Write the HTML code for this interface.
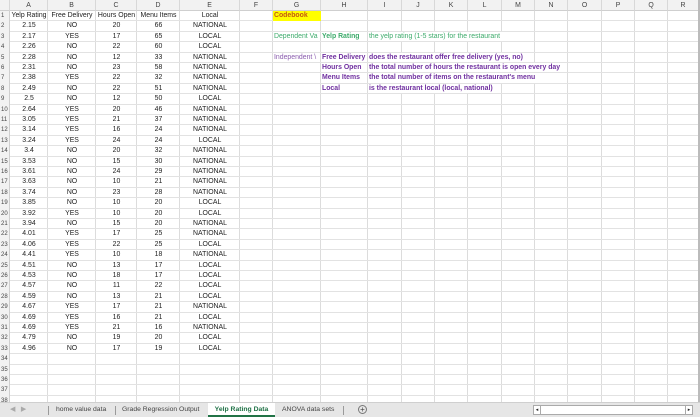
<!DOCTYPE html>
<html><head><meta charset="utf-8"><style>
*{margin:0;padding:0;box-sizing:border-box}
body{width:700px;height:417px;overflow:hidden;background:#fff;font-family:"Liberation Sans",sans-serif;font-size:6.9px;color:#222;position:relative}
.c{position:absolute;white-space:nowrap;line-height:10.4px;height:10.4px;overflow:visible}
.vl{position:absolute;top:0;width:1px;background:#dcdcdc;height:402px}
.hl{position:absolute;left:0;height:1px;background:#e2e2e2;width:700px}
.hd{position:absolute;top:0;height:11px;background:#f2f2f2;border-bottom:1px solid #cfcfcf;border-right:1px solid #d8d8d8;text-align:center;line-height:11px;color:#444}
.rn{position:absolute;left:0;width:10px;background:#f2f2f2;color:#444;font-size:6px;line-height:10.4px;height:10.4px;padding-left:1px;border-right:1px solid #cfcfcf}
#tabs{position:absolute;left:0;top:402px;width:700px;height:15px;background:#e6e6e6;border-top:1px solid #cfcfcf}
.t{position:absolute;top:0;height:14px;line-height:13px;font-size:6.8px;color:#444}
.sep{position:absolute;top:3px;width:1px;height:9px;background:#9a9a9a}
</style></head><body>
<div id="g"></div>
<div id="tabs">
<div class="t" style="left:10px;color:#aaa">◀&nbsp;&nbsp;&nbsp;▶</div>
<div class="sep" style="left:48px"></div>
<div class="t" style="left:56px">home value data</div>
<div class="sep" style="left:115px"></div>
<div class="t" style="left:122px">Grade Regression Output</div>
<div class="t" style="left:208px;width:67px;background:#fff;color:#1e7145;font-weight:bold;text-align:center;border-bottom:2px solid #217346">Yelp Rating Data</div>
<div class="t" style="left:282px">ANOVA data sets</div>
<div class="sep" style="left:343px"></div>
<div class="t" style="left:358px;top:2px;width:9px;height:9px;border:1px solid #777;border-radius:50%;line-height:7px;text-align:center;font-size:8px">+</div>
<div style="position:absolute;left:533px;top:2px;width:160px;height:10px;border:1px solid #aaa;background:#fff"></div>
<div style="position:absolute;left:533px;top:2px;width:8px;height:10px;border:1px solid #aaa;background:#fff;font-size:5px;line-height:8px;text-align:center">◂</div>
<div style="position:absolute;left:685px;top:2px;width:8px;height:10px;border:1px solid #aaa;background:#fff;font-size:5px;line-height:8px;text-align:center">▸</div>
</div>
<script>
var cols=[0,10,48,96,137,180,240,273,321,368,402,435,468,502,535,568,602,635,668,699];
var L="ABCDEFGHIJKLMNOPQR";
var h="";
var R=10.4,T=11;
for(var i=0;i<18;i++){h+='<div class="hd" style="left:'+cols[i+1]+'px;width:'+(cols[i+2]-cols[i+1])+'px">'+L[i]+'</div>';}
h+='<div class="hd" style="left:0;width:10px"></div>';
for(var i=2;i<cols.length;i++)h+='<div class="vl" style="left:'+(cols[i]-1)+'px;top:11px;height:391px"></div>';
for(var r=0;r<38;r++){var y=T+r*R;if(y>402)break;h+='<div class="hl" style="top:'+(y+R-1).toFixed(1)+'px"></div>';h+='<div class="rn" style="top:'+y.toFixed(1)+'px">'+(r+1)+'</div>';}
var d="2.15 NO 20 66 NATIONAL|2.17 YES 17 65 LOCAL|2.26 NO 22 60 LOCAL|2.28 NO 12 33 NATIONAL|2.31 NO 23 58 NATIONAL|2.38 YES 22 32 NATIONAL|2.49 NO 22 51 NATIONAL|2.5 NO 12 50 LOCAL|2.64 YES 20 46 NATIONAL|3.05 YES 21 37 NATIONAL|3.14 YES 16 24 NATIONAL|3.24 YES 24 24 LOCAL|3.4 NO 20 32 NATIONAL|3.53 NO 15 30 NATIONAL|3.61 NO 24 29 NATIONAL|3.63 NO 10 21 NATIONAL|3.74 NO 23 28 NATIONAL|3.85 NO 10 20 LOCAL|3.92 YES 10 20 LOCAL|3.94 NO 15 20 NATIONAL|4.01 YES 17 25 NATIONAL|4.06 YES 22 25 LOCAL|4.41 YES 10 18 NATIONAL|4.51 NO 13 17 LOCAL|4.53 NO 18 17 LOCAL|4.57 NO 11 22 LOCAL|4.59 NO 13 21 LOCAL|4.67 YES 17 21 NATIONAL|4.69 YES 16 21 LOCAL|4.69 YES 21 16 NATIONAL|4.79 NO 19 20 LOCAL|4.96 NO 17 19 LOCAL".split("|");
var rows=[["Yelp Rating","Free Delivery","Hours Open","Menu Items","Local"]];
d.forEach(function(s){rows.push(s.split(" "));});
rows.forEach(function(rw,r){var y=T+r*R;rw.forEach(function(v,c){var x=cols[c+1],w=cols[c+2]-cols[c+1];h+='<div class="c" style="left:'+x+'px;width:'+w+'px;top:'+y.toFixed(1)+'px;text-align:center">'+v+'</div>';});});
function cell(col,row,txt,st){var y=T+(row-1)*R;h+='<div class="c" style="left:'+(cols[col]+1)+'px;top:'+y.toFixed(1)+'px;'+st+'">'+txt+'</div>';}
h+='<div style="position:absolute;left:273px;top:11px;width:48px;height:10px;background:#ffff00"></div>';
cell(7,1,"Codebook","color:#c55a11;font-weight:bold");
var gr="color:#3dab6b;";
cell(7,3,"Dependent Va",gr+"width:47px;overflow:hidden");
cell(8,3,"Yelp Rating",gr+"font-weight:bold");
var bg="background:#fff;height:9.4px;line-height:9.4px;padding-right:3px;";
cell(9,3,"the yelp rating (1-5 stars) for the restaurant",gr+bg);
var pu="color:#7030a0;";
cell(7,5,"Independent \\",pu+"width:47px;overflow:hidden;color:#8a5cae");
var hh=["Free Delivery","Hours Open","Menu Items","Local"];
var ii=["does the restaurant offer free delivery (yes, no)","the total number of hours the restaurant is open every day","the total number of items on the restaurant's menu","is the restaurant local (local, national)"];
for(var k=0;k<4;k++){cell(8,5+k,hh[k],pu+"font-weight:bold");cell(9,5+k,ii[k],pu+"font-weight:bold;"+bg);}
h+='<div style="position:absolute;left:698px;top:0;width:2px;height:402px;background:#bbb"></div>';
document.getElementById("g").innerHTML=h;
</script>
</body></html>
